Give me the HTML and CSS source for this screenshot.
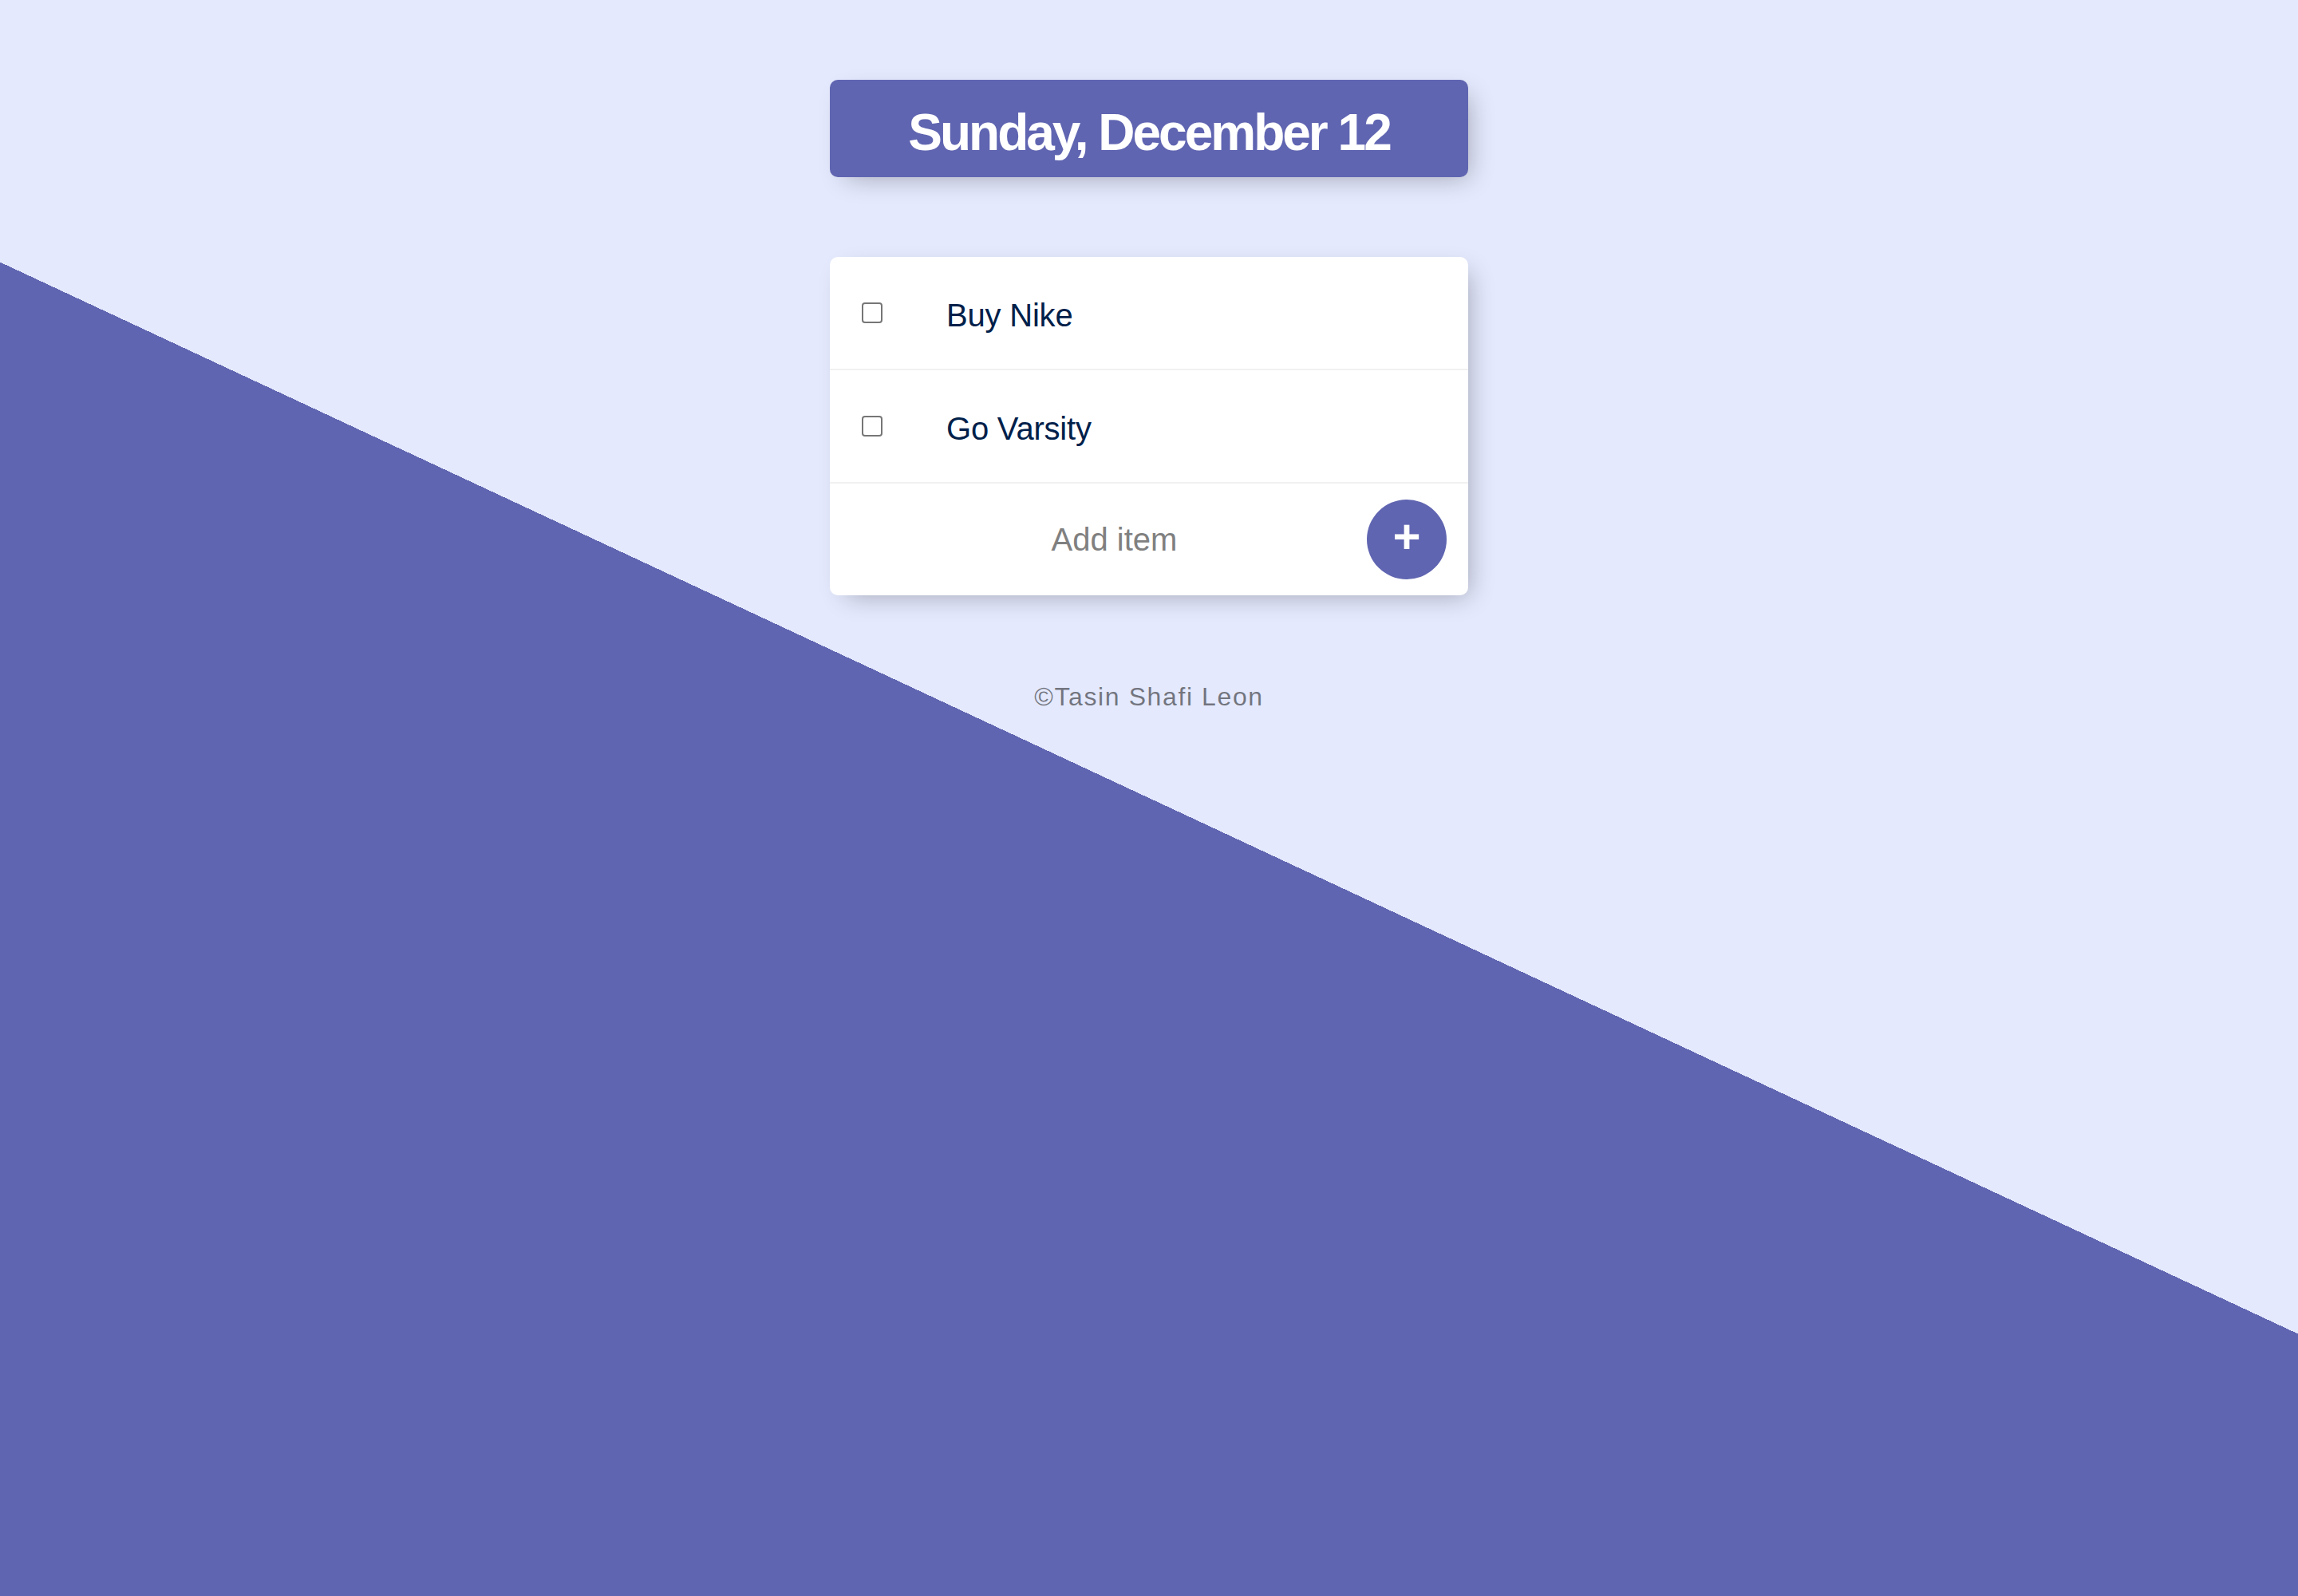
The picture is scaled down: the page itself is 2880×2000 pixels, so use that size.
FILE: index.html
```
<!DOCTYPE html>
<html lang="en">
<head>
<meta charset="utf-8">
<title>To-Do List</title>
<link rel="stylesheet" href="styles.css">
</head>
<body>
<main class="page">
  <div class="box heading"><h1 class="heading-title">Sunday, December 12</h1></div>
  <div class="box list">
    <div class="item">
      <input class="check" type="checkbox">
      <p class="item-text">Buy Nike</p>
    </div>
    <div class="item">
      <input class="check" type="checkbox">
      <p class="item-text">Go Varsity</p>
    </div>
    <form class="item add-form" action="#" onsubmit="return false">
      <input class="add-input" type="text" name="newItem" placeholder="Add item" autocomplete="off">
      <button class="add-btn" type="submit">+</button>
    </form>
  </div>
  <footer class="footer">©Tasin Shafi Leon</footer>
</main>
</body>
</html>
```

FILE: styles.css
```
html {
  height: 2000px;
  background-color: #e4e9fd;
  background-image: linear-gradient(25deg, #6065b1 50%, #e4e9fd 50%);
  background-repeat: no-repeat;
}

body {
  margin: 0;
  font-family: "Liberation Sans", Arial, sans-serif;
}

.page {
  padding-top: 100px;
}

.box {
  width: 800px;
  margin: 0 auto;
  background: #ffffff;
  border-radius: 10px;
  box-shadow: 10px 10px 30px -10px rgba(0, 0, 0, 0.3);
}

.heading {
  background: #6065b1;
  height: 122px;
  box-sizing: border-box;
  padding-top: 29px;
  text-align: center;
}

.heading-title {
  margin: 0;
  font-size: 64px;
  font-weight: 700;
  line-height: 74px;
  letter-spacing: -3px;
  color: #ffffff;
}

.list {
  margin-top: 100px;
}

.item {
  height: 140px;
  display: flex;
  align-items: center;
  border-bottom: 2px solid #f1f1f1;
}

.item:last-child {
  border-bottom: 0;
}

.check {
  appearance: none;
  -webkit-appearance: none;
  width: 26px;
  height: 26px;
  margin: 0 40px;
  box-sizing: border-box;
  border: 2px solid #767676;
  border-radius: 4px;
  background: #ffffff;
}

.item-text {
  margin: 6px 0 0;
  padding: 0 40px;
  font-size: 40px;
  letter-spacing: -0.2px;
  color: #00204a;
}

.add-form {
  margin: 0;
  padding: 0 27px 0 40px;
}

.add-input {
  flex: 1;
  min-width: 0;
  height: 100px;
  border: none;
  outline: none;
  padding: 0;
  font-family: "Liberation Sans", Arial, sans-serif;
  font-size: 40px;
  text-align: center;
  color: #333333;
  background: transparent;
}

.add-input::placeholder {
  color: #808080;
  opacity: 1;
}

.add-btn {
  width: 100px;
  height: 100px;
  flex: none;
  border: 0;
  border-radius: 50%;
  background: #6065b1;
  color: #ffffff;
  font-family: "Liberation Sans", Arial, sans-serif;
  font-size: 60px;
  font-weight: 700;
  line-height: 1;
  padding: 0 0 6px;
  display: flex;
  align-items: center;
  justify-content: center;
}

.footer {
  margin-top: 109px;
  text-align: center;
  font-size: 32px;
  letter-spacing: 1.6px;
  color: rgba(0, 0, 0, 0.5);
}
```
